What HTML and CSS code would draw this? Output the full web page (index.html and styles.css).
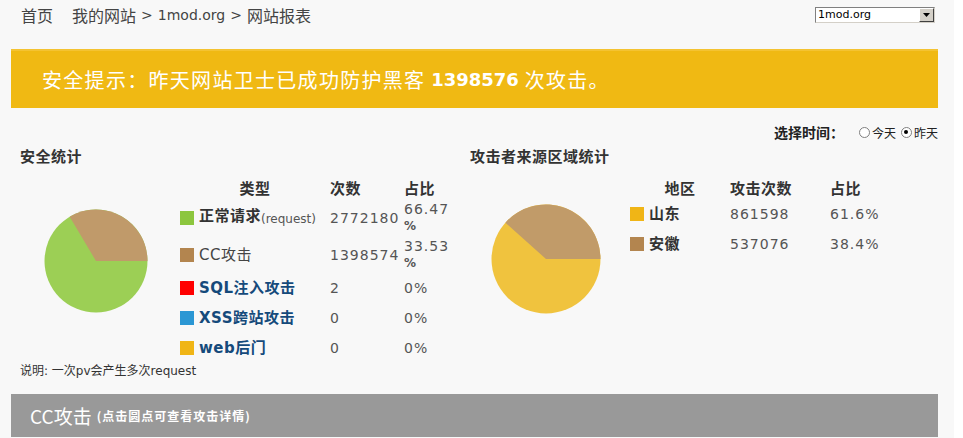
FILE: index.html
```html
<!DOCTYPE html>
<html lang="zh-CN">
<head>
<meta charset="utf-8">
<title>网站报表</title>
<link rel="stylesheet" href="styles.css">
</head>
<body>
<div class="page">
  <div class="topbar">
    <div class="crumbs"><span class="c-old c-home">首页</span><span class="c-old c-site">我的网站</span><span class="sep">&gt;</span><span class="c-en">1mod.org</span><span class="sep">&gt;</span><span class="c-cn">网站报表</span></div>
    <div class="site-select">
      <span class="val">1mod.org</span>
      <span class="arrow"><svg width="7" height="4" viewBox="0 0 7 4"><path d="M0 0H7L3.5 4Z" fill="#000"/></svg></span>
    </div>
  </div>
  <div class="wrap">
    <div class="banner">安全提示：昨天网站卫士已成功防护黑客 <b>1398576</b> 次攻击。</div>
    <div class="timebar">
      <span class="tlabel">选择时间：</span>
      <label class="opt"><span class="radio"></span>今天</label>
      <label class="opt"><span class="radio on"></span>昨天</label>
    </div>
    <div class="stats">
      <section class="col col-left">
        <h2 class="title">安全统计</h2>
        <div class="body">
          <svg class="pie pie-left" width="104" height="104" viewBox="0 0 104 104">
            <circle cx="52" cy="52" r="51.5" fill="#9ccf55"/>
            <path d="M52 52 L103.5 52 A51.5 51.5 0 0 0 25.71 7.72 Z" fill="#c09a6a"/>
          </svg>
          <div class="tbl tbl-type">
            <div class="th th-center">类型</div>
            <div class="th">次数</div>
            <div class="th">占比</div>

            <div class="td type"><span class="sq sq-green"></span><span class="lbl"><b class="cn">正常请求</b><span class="en">(request)</span></span></div>
            <div class="td num">2772180</div>
            <div class="td num pct2">66.47<br><span class="pc">%</span></div>

            <div class="td type"><span class="sq sq-brown"></span><span class="lbl"><span class="cn cc">CC攻击</span></span></div>
            <div class="td num">1398574</div>
            <div class="td num pct2">33.53<br><span class="pc">%</span></div>

            <div class="td type"><span class="sq sq-red"></span><span class="lbl"><b class="cn link">SQL注入攻击</b></span></div>
            <div class="td num">2</div>
            <div class="td num">0%</div>

            <div class="td type"><span class="sq sq-blue"></span><span class="lbl"><b class="cn link">XSS跨站攻击</b></span></div>
            <div class="td num">0</div>
            <div class="td num">0%</div>

            <div class="td type"><span class="sq sq-yellow"></span><span class="lbl"><b class="cn link">web后门</b></span></div>
            <div class="td num">0</div>
            <div class="td num">0%</div>
          </div>
        </div>
        <p class="note">说明: 一次pv会产生多次request</p>
      </section>
      <section class="col col-right">
        <h2 class="title">攻击者来源区域统计</h2>
        <div class="body">
          <svg class="pie pie-right" width="110" height="110" viewBox="0 0 110 110">
            <circle cx="55" cy="55" r="54.5" fill="#f0c33e"/>
            <path d="M55 55 L109.5 55 A54.5 54.5 0 0 0 14.37 18.68 Z" fill="#c19b69"/>
          </svg>
          <div class="tbl tbl-region">
            <div class="th th-center">地区</div>
            <div class="th">攻击次数</div>
            <div class="th">占比</div>

            <div class="td type"><span class="sq sq-yellow"></span><span class="lbl"><b class="cn">山东</b></span></div>
            <div class="td num">861598</div>
            <div class="td num">61.6%</div>

            <div class="td type"><span class="sq sq-brown"></span><span class="lbl"><b class="cn">安徽</b></span></div>
            <div class="td num">537076</div>
            <div class="td num">38.4%</div>
          </div>
        </div>
      </section>
    </div>
    <div class="graybar"><span class="gb-title">CC攻击</span><span class="gb-sub">(点击圆点可查看攻击详情)</span></div>
  </div>
</div>
</body>
</html>
```

FILE: styles.css
```css
html {
  background: #ffffff;
}
body {
  margin: 0;
  font-family: "DejaVu Sans", "Noto Sans CJK SC", sans-serif;
  color: #333;
}
.page {
  width: 954px;
  height: 438px;
  background: #f8f8f8;
  overflow: hidden;
}
.topbar {
  height: 30px;
  box-sizing: border-box;
  padding: 7px 19px 0 7px;
  display: flex;
  justify-content: space-between;
  align-items: flex-start;
}
.crumbs {
  font-size: 14px;
  line-height: 16px;
  color: #444;
  display: flex;
  align-items: center;
}
.c-old,
.c-cn {
  font-family: "Noto Sans CJK SC", sans-serif;
  font-size: 16px;
}
.c-home {
  padding-left: 14px;
}
.c-site {
  margin-left: 19px;
}
.sep {
  margin: 0 5px;
}
.site-select {
  width: 120px;
  height: 16px;
  box-sizing: border-box;
  border: 1px solid #808080;
  border-right-color: #d4d0c8;
  border-bottom-color: #d4d0c8;
  background: #fff;
  display: flex;
  align-items: center;
  justify-content: space-between;
}
.site-select .val {
  font-size: 11px;
  line-height: 14px;
  color: #000;
  padding-left: 2px;
}
.site-select .arrow {
  width: 15px;
  height: 14px;
  box-sizing: border-box;
  background: #d4d0c8;
  border: 1px solid #fff;
  border-right-color: #404040;
  border-bottom-color: #404040;
  display: flex;
  align-items: center;
  justify-content: center;
}
.wrap {
  margin-left: 11px;
  width: 927px;
}
.banner {
  margin-top: 19px;
  height: 59px;
  box-sizing: border-box;
  border-top: 2px solid #f4c332;
  background: #f0b913;
  color: #fff;
  font-size: 20px;
  letter-spacing: 1.3px;
  padding-left: 31px;
  display: flex;
  align-items: center;
  font-family: "Noto Sans CJK SC", sans-serif;
  white-space: pre;
}
.banner b {
  font-family: "DejaVu Sans", sans-serif;
  font-size: 18px;
  letter-spacing: 0;
  font-weight: bold;
}
.timebar {
  margin-top: 12px;
  height: 24px;
  display: flex;
  justify-content: flex-end;
  align-items: center;
  font-size: 12px;
}
.tlabel {
  font-weight: bold;
  font-size: 14px;
  color: #222;
  font-family: "Noto Sans CJK SC", sans-serif;
  margin-right: 10px;
}
.opt {
  display: flex;
  align-items: center;
  margin-left: 5px;
  color: #222;
}
.radio {
  width: 11px;
  height: 11px;
  box-sizing: border-box;
  border-radius: 50%;
  border: 1px solid #808080;
  background: #fff;
  margin-right: 2px;
  position: relative;
}
.radio.on::after {
  content: "";
  position: absolute;
  left: 2.5px;
  top: 2.5px;
  width: 4px;
  height: 4px;
  border-radius: 50%;
  background: #000;
}
.stats {
  display: flex;
  padding-left: 9px;
}
.col-left {
  width: 450px;
}
.col-right {
  flex: 1;
}
.title {
  margin: 0;
  height: 24px;
  line-height: 24px;
  font-size: 15px;
  font-weight: bold;
  letter-spacing: 0.5px;
  color: #333;
  font-family: "Noto Sans CJK SC", sans-serif;
}
.body {
  margin-top: 9px;
  display: flex;
  align-items: flex-start;
}
.pie {
  display: block;
  flex: none;
}
.pie-left {
  margin: 32px 32px 0 24px;
}
.pie-right {
  margin: 27px 29px 0 21px;
}
.tbl {
  display: grid;
  grid-template-rows: 22px;
  grid-auto-rows: minmax(30px, auto);
  align-items: center;
}
.tbl-type {
  grid-template-columns: 150px 74px 50px;
}
.tbl-region {
  grid-template-columns: 100px 100px 60px;
}
.th {
  font-family: "Noto Sans CJK SC", sans-serif;
  font-weight: bold;
  font-size: 15px;
  letter-spacing: 0.5px;
  color: #333;
  line-height: 22px;
}
.th-center {
  text-align: center;
}
.td.type {
  display: flex;
  align-items: center;
  white-space: nowrap;
}
.lbl {
  line-height: 20px;
}
.sq {
  width: 14px;
  height: 14px;
  margin-right: 5px;
  flex: none;
}
.sq-green { background: #8cc63e; }
.sq-brown { background: #b3854f; }
.sq-red { background: #ff0000; }
.sq-blue { background: #2b97d4; }
.sq-yellow { background: #f0b516; }
.cn {
  font-family: "DejaVu Sans", "Noto Sans CJK SC", sans-serif;
  font-size: 15px;
  letter-spacing: 0.5px;
  color: #333;
}
.cn.cc {
  font-weight: normal;
  color: #444;
}
.cn.link {
  color: #154a7b;
}
.en {
  font-size: 12px;
  color: #555;
  vertical-align: -2px;
}
.num {
  font-size: 14px;
  letter-spacing: 1px;
  color: #555;
  line-height: 16px;
}
.pct2 {
  padding: 2px 0;
}
.pc {
  font-size: 12px;
  font-weight: bold;
}
.note {
  margin: 0;
  font-size: 12px;
  line-height: 16px;
  color: #333;
}
.graybar {
  margin-top: 15px;
  height: 43px;
  background: #999999;
  color: #fff;
  padding-left: 19px;
  display: flex;
  align-items: center;
  font-family: "Noto Sans CJK SC", sans-serif;
}
.gb-title {
  font-size: 19px;
  margin-right: 5px;
}
.gb-sub {
  font-size: 12px;
  letter-spacing: 1px;
  font-weight: bold;
}
```
